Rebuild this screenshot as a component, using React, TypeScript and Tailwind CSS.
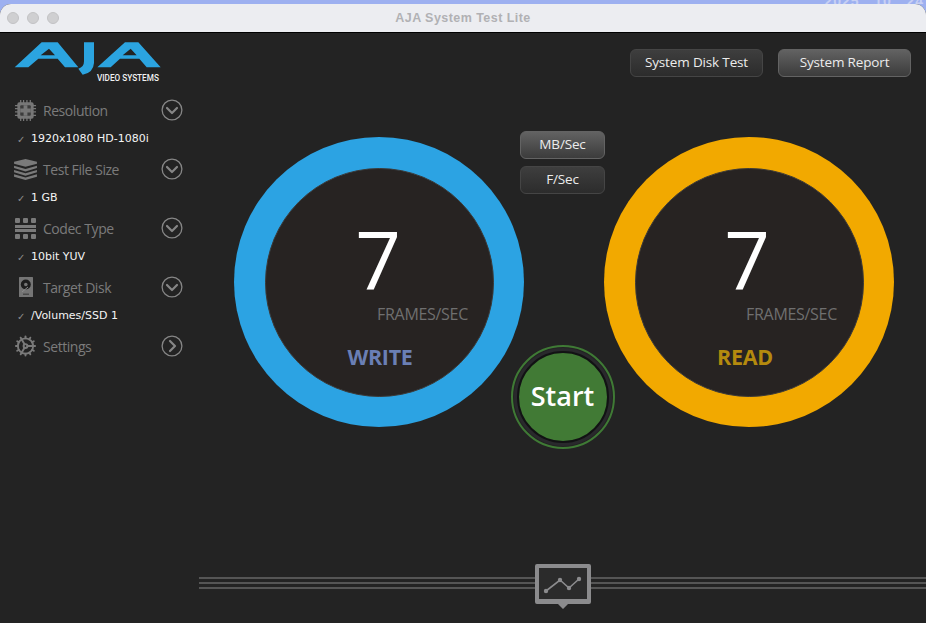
import { Cog } from "lucide-react";
import type { ReactNode } from "react";

const sans = "font-['Open_Sans','Noto_Sans',sans-serif]";

function Logo() {
  return (
    <div className="relative ml-[10px] mt-[5px] h-[48px] w-[155px]">
      <svg viewBox="0 0 465 144" className="h-[48px] w-[155px]">
        <path
          fill="#2ba4e0"
          fillRule="evenodd"
          d="M14,88 L95,13 L143,13 L205,88 L165,88 L143,62 L85,62 L55,88Z M92,52 L135,52 L117,32Z"
        />
        <path fill="#2ba4e0" d="M222,13 L252,13 L252,75 Q250,105 218,110 L205,92 Q222,88 222,70Z" />
        <path
          fill="#2ba4e0"
          fillRule="evenodd"
          d="M262,88 L345,13 L385,13 L452,88 L410,88 L388,62 L330,62 L302,88Z M338,52 L380,52 L362,32Z"
        />
      </svg>
      <span className="absolute left-[87px] top-[35px] whitespace-nowrap font-['Roboto',sans-serif] text-[8.2px] font-medium leading-[11px] text-[#f2f2f2]">
        VIDEO SYSTEMS
      </span>
    </div>
  );
}

function ChipIcon() {
  return (
    <svg viewBox="0 0 24 24" className="h-[23px] w-[23px]" fill="none">
      <path
        stroke="#777"
        strokeWidth="1.3"
        d="M7 1v22M10 1v22M13.5 1v22M17 1v22M1 7h22M1 10h22M1 13.5h22M1 17h22"
      />
      <rect x="3.5" y="3.5" width="17" height="17" rx="2" fill="#777" />
      <rect x="6.5" y="6.5" width="11" height="11" rx="1" fill="#3c3c3c" />
      <path fill="#777" d="M10 6.5h4v11h-4zM6.5 10h11v4h-11z" />
    </svg>
  );
}

function StackIcon() {
  return (
    <svg viewBox="0 0 24 22" className="h-[21px] w-[24px]">
      <path fill="#7a7a7a" d="M12 0 L24 3 V5 L12 8 L0 5 V3Z" />
      <path fill="#7a7a7a" d="M0 7 L12 10.5 L24 7 V9.5 L12 13 L0 9.5Z" />
      <path fill="#7a7a7a" d="M0 11.5 L12 15 L24 11.5 V14 L12 17.5 L0 14Z" />
      <path fill="#7a7a7a" d="M0 16 L12 19.5 L24 16 V18.5 L12 22 L0 18.5Z" />
    </svg>
  );
}

function CodecIcon() {
  return (
    <svg viewBox="0 0 21 21" className="h-[21px] w-[21px]" fill="#7a7a7a">
      <rect x="0" y="0" width="5" height="5" rx="1" />
      <rect x="8" y="0" width="5" height="5" rx="1" />
      <rect x="16" y="0" width="5" height="5" rx="1" />
      <rect x="0" y="7" width="21" height="3" />
      <rect x="0" y="11" width="21" height="3" />
      <rect x="0" y="16" width="5" height="5" rx="1" />
      <rect x="8" y="16" width="5" height="5" rx="1" />
      <rect x="16" y="16" width="5" height="5" rx="1" />
    </svg>
  );
}

function DiskIcon() {
  return (
    <svg viewBox="0 0 14 20" className="h-[20px] w-[14px]">
      <rect width="14" height="20" rx="0.5" fill="#757575" />
      <circle cx="6.8" cy="7.5" r="5" fill="#1d1d1d" />
      <circle cx="6.8" cy="7.5" r="1.8" fill="#757575" />
      <path d="M3 15 L9 10" stroke="#8d8d8d" strokeWidth="1" />
      <rect x="4" y="16.5" width="6" height="1.5" fill="#4a4a4a" />
    </svg>
  );
}

function RoundChevron({ right }: { right?: boolean }) {
  return (
    <svg viewBox="0 0 22 22" className="h-[22px] w-[22px]" fill="none" stroke="#868686">
      <circle cx="11" cy="11" r="9.9" strokeWidth="1.3" />
      <path d={right ? "M9 6 L14 11 L9 16" : "M6 9 L11 14 L16 9"} strokeWidth="2.2" strokeLinecap="round" strokeLinejoin="round" />
    </svg>
  );
}

function Row({
  icon,
  label,
  value,
  peek,
  right,
}: {
  icon: ReactNode;
  label: string;
  value?: string;
  peek?: string;
  right?: boolean;
}) {
  return (
    <div className="flex flex-col">
      <div className="flex h-[30px] items-center">
        <div className="flex w-[43px] justify-center pl-[14px] pr-[6px]">{icon}</div>
        <span className={`${sans} w-[118px] text-[14px] tracking-[-0.45px] text-[#7b7b7b]`}>{label}</span>
        <RoundChevron right={right} />
      </div>
      {value && (
        <div className="h-[29px] pt-[5px]">
          <div className="flex h-[19px] items-center">
            <span className="w-[31px] pl-[17px] font-['DejaVu_Sans',sans-serif] text-[10px] text-[#8c8c8c]">✓</span>
            <span className="whitespace-nowrap font-['DejaVu_Sans',sans-serif] text-[11px] text-[#f4f4f4]">
              {value}
            </span>
          </div>
          <div className="ml-[31px] h-[1px] overflow-hidden whitespace-nowrap font-['DejaVu_Sans',sans-serif] text-[11px] leading-[13px] text-[#777]">
            {peek}
          </div>
        </div>
      )}
    </div>
  );
}

function Btn({ label, on, w }: { label: string; on?: boolean; w: string }) {
  return (
    <div
      className={`${sans} ${w} flex h-[28px] shrink-0 items-center justify-center rounded-[6px] border pb-[2px] text-[13.5px] font-medium tracking-[-0.15px] text-[#ececec] ${
        on
          ? "border-[#636363] bg-gradient-to-b from-[#626262] to-[#3c3c3c]"
          : "border-[#454545] bg-gradient-to-b from-[#3e3e3e] to-[#2c2c2c]"
      }`}
    >
      {label}
    </div>
  );
}

function Gauge({ ring, label, labelColor, shift }: { ring: string; label: string; labelColor: string; shift?: boolean }) {
  return (
    <div className={`flex h-[290px] w-[290px] shrink-0 items-center justify-center rounded-full ${ring}`}>
      <div className={`${sans} flex h-[229px] w-[229px] flex-col items-center rounded-full border border-[#3c3a39] bg-[#272322]`}>
        <span className={`mt-[50px] h-[80px] text-[80px] font-normal leading-[80px] text-white ${shift ? "-ml-[4px]" : "-ml-[2px]"}`}>7</span>
        <span className={`mt-[4px] text-[16px] leading-[22px] tracking-[-0.3px] text-[#6f6f6f] ${shift ? "ml-[85px]" : "ml-[87px]"}`}>
          FRAMES/SEC
        </span>
        <span
          className={`mt-[18px] text-[21.5px] font-bold leading-[28px] tracking-[-0.3px] ${labelColor} ${shift ? "-ml-[8px]" : "ml-[2px]"}`}
        >
          {label}
        </span>
      </div>
    </div>
  );
}

export default function App() {
  return (
    <div className="flex h-[623px] w-[926px] flex-col overflow-hidden bg-[#9db0f0]">
      <div className="flex h-[4px] justify-end overflow-hidden whitespace-pre pr-[2px] font-['Liberation_Sans',sans-serif] text-[14px] font-bold leading-[3px] tracking-[1px] text-[#c8d0f4]">
        2025   10   24
      </div>
      <div className="flex min-h-0 flex-1 flex-col overflow-hidden rounded-t-[11px] bg-[#232323]">
        <div className="relative flex h-[29px] shrink-0 items-center justify-center border-b border-black bg-[#ecedf1]">
          <div className="absolute left-[7px] flex gap-[8px]">
            <span className="h-[12px] w-[12px] rounded-full border border-[#c2c2c4] bg-[#cfcfd1]" />
            <span className="h-[12px] w-[12px] rounded-full border border-[#c2c2c4] bg-[#cfcfd1]" />
            <span className="h-[12px] w-[12px] rounded-full border border-[#c2c2c4] bg-[#cfcfd1]" />
          </div>
          <span className="font-['Liberation_Sans',sans-serif] text-[12.5px] font-bold tracking-[0.45px] text-[#b1b1b4]">
            AJA System Test Lite
          </span>
        </div>
        <div className="flex min-h-0 flex-1">
          <aside className="w-[199px] shrink-0">
            <Logo />
            <div className="mt-[9px] flex flex-col">
              <Row icon={<ChipIcon />} label="Resolution" value="1920x1080 HD-1080i" peek="1280x720 HD-720p" />
              <Row icon={<StackIcon />} label="Test File Size" value="1 GB" peek="i" />
              <Row icon={<CodecIcon />} label="Codec Type" value="10bit YUV" peek="10bit RGB" />
              <Row icon={<DiskIcon />} label="Target Disk" value="/Volumes/SSD 1" peek="/Volumes/x" />
              <Row icon={<Cog size={24} strokeWidth={2} color="#7a7a7a" />} label="Settings" right />
            </div>
          </aside>
          <main className="flex min-w-0 flex-1 flex-col">
            <div className="flex justify-end gap-[15px] pr-[15px] pt-[16px]">
              <Btn label="System Disk Test" w="w-[133px]" />
              <Btn label="System Report" w="w-[133px]" on />
            </div>
            <div className="mt-[60px] flex pl-[35px]">
              <Gauge ring="bg-[#2ca3e3]" label="WRITE" labelColor="text-[#6a7fb5]" />
              <div className="flex w-[80px] shrink-0 flex-col items-center">
                <div className="mr-[3px] -mt-[6px] flex flex-col items-center gap-[7px]">
                  <Btn label="MB/Sec" w="w-[85px]" on />
                  <Btn label="F/Sec" w="w-[85px]" />
                </div>
                <div className="mr-[3px] mt-[151px] flex h-[104px] w-[104px] shrink-0 items-center justify-center rounded-full border-2 border-[#3f7a35]">
                  <div className="flex h-[98px] w-[98px] items-center justify-center rounded-full bg-[#29292c]">
                    <div className="flex h-[92px] w-[92px] items-center justify-center rounded-full border-2 border-[#121214] bg-[#417a35] pb-[2px]">
                      <span className={`${sans} text-[27px] font-semibold text-white`}>Start</span>
                    </div>
                  </div>
                </div>
              </div>
              <Gauge ring="bg-[#f2a900]" label="READ" labelColor="text-[#b48a0e]" shift />
            </div>
            <div className="relative mb-[34px] mt-auto flex flex-col gap-[3px]">
              <div className="h-[2px] bg-[#555]" />
              <div className="h-[2px] bg-[#555]" />
              <div className="h-[2px] bg-[#555]" />
              <svg viewBox="0 0 56 46" className="absolute left-[336px] top-[-13px] h-[46px] w-[56px]">
                <path fill="#8b8b8d" d="M2 0H54a2 2 0 0 1 2 2V38a2 2 0 0 1-2 2H33L28 45 23 40H2a2 2 0 0 1-2-2V2a2 2 0 0 1 2-2Z" />
                <rect x="4" y="4" width="48" height="31" fill="#2b2b2b" />
                <path d="M11 27 L25 16 L34 24 L44 15" fill="none" stroke="#8b8b8d" strokeWidth="1.6" />
                <circle cx="11" cy="27" r="2.2" fill="#8b8b8d" />
                <circle cx="25" cy="16" r="2.2" fill="#8b8b8d" />
                <circle cx="34" cy="24" r="2.2" fill="#8b8b8d" />
                <circle cx="44" cy="15" r="2.2" fill="#8b8b8d" />
              </svg>
            </div>
          </main>
        </div>
      </div>
    </div>
  );
}
